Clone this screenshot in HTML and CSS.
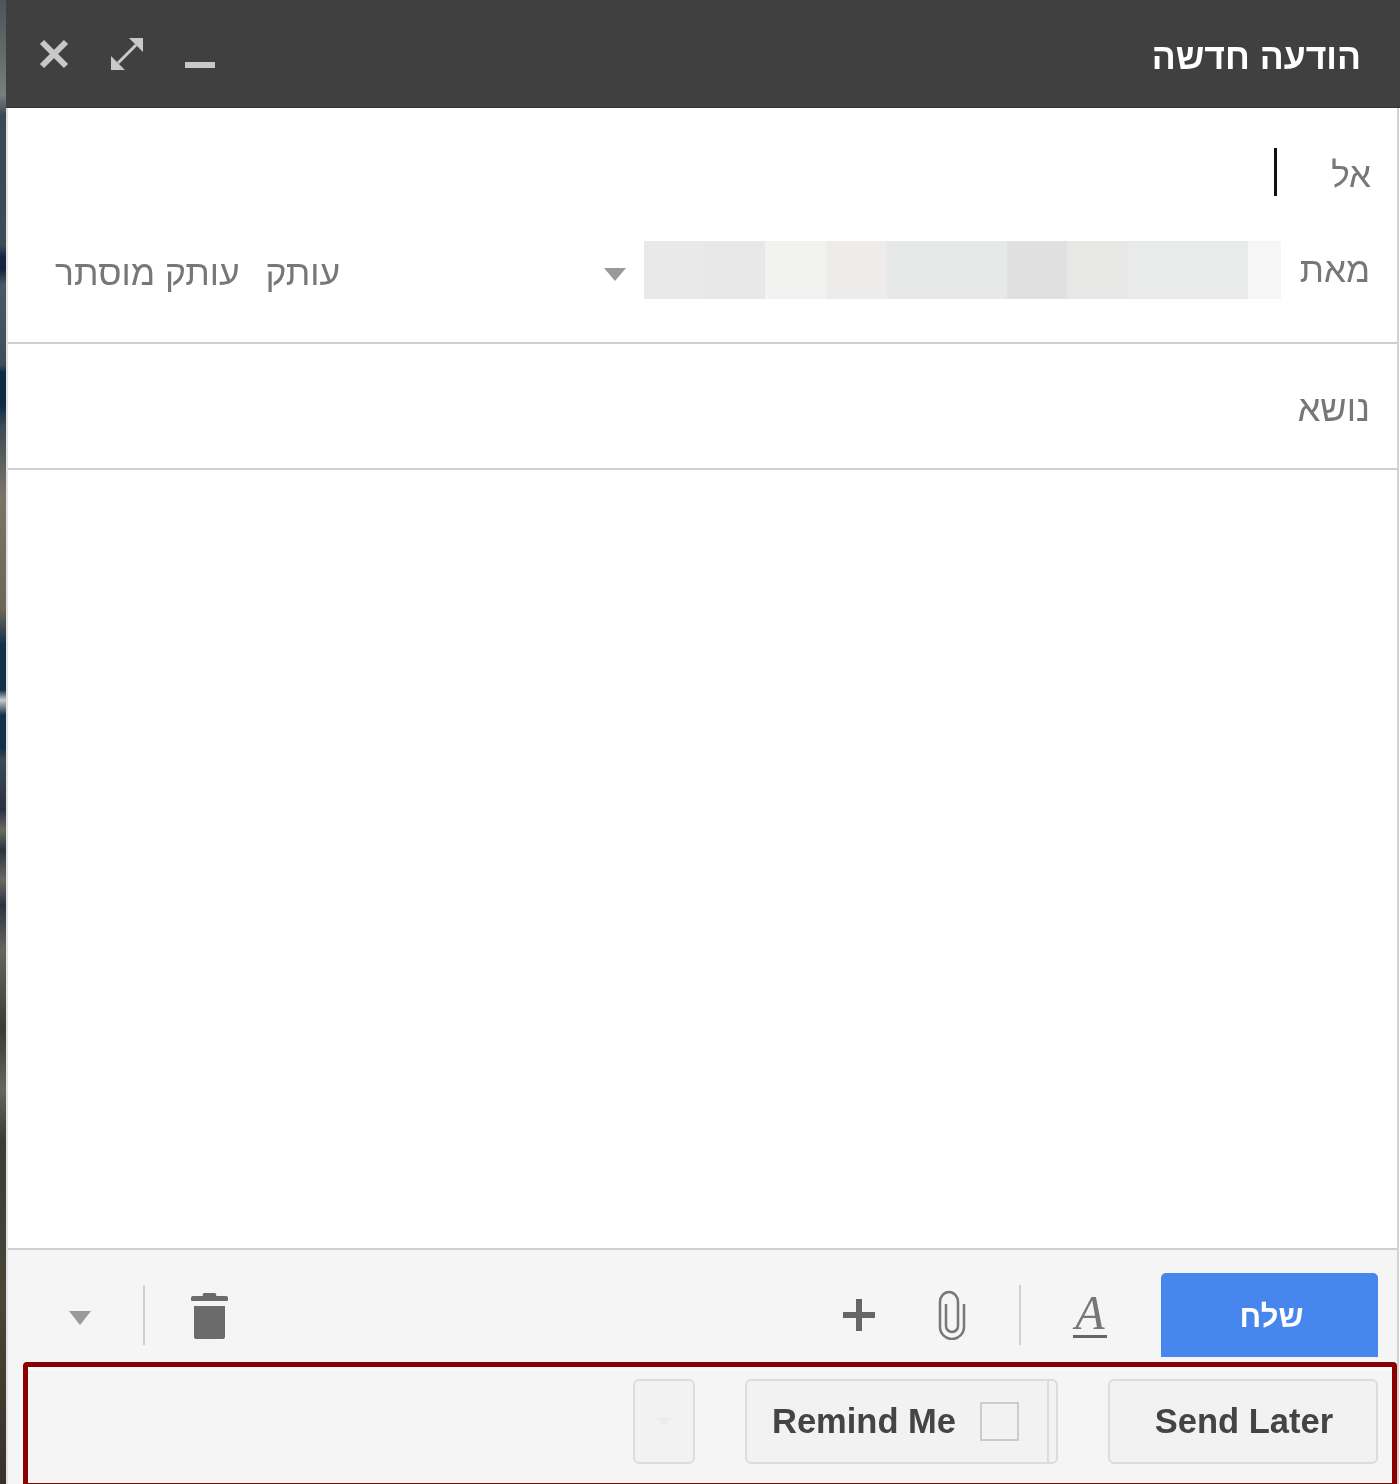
FILE: index.html
```html
<!DOCTYPE html>
<html lang="he" dir="rtl">
<head>
<meta charset="utf-8">
<title>הודעה חדשה</title>
<link rel="stylesheet" href="styles.css">
</head>
<body>
<div class="window">
  <header class="titlebar">
    <span class="title">הודעה חדשה</span>
    <div class="window-icons">
      <svg class="wicon" viewBox="0 0 32 32"><rect x="1" y="24" width="30" height="6" fill="#c8c8c8"/></svg>
      <svg class="wicon" viewBox="0 0 32 32"><path d="M32 0v14L18 0zM0 32V18l14 14z" fill="#c8c8c8"/><path d="M25 7L7 25" stroke="#c8c8c8" stroke-width="3" fill="none"/></svg>
      <svg class="wicon" viewBox="0 0 32 32"><path d="M4 4l24 24M28 4L4 28" stroke="#c8c8c8" stroke-width="6" fill="none"/></svg>
    </div>
  </header>
  <main class="main">
    <div class="recipients">
      <div class="to-row"><span class="label">אל</span><span class="cursor"></span></div>
      <div class="from-row">
        <span class="label">מאת</span>
        <div class="blurred" dir="ltr">
          <i class="s1"></i><i class="s2"></i><i class="s3"></i><i class="s4"></i><i class="s5"></i><i class="s6"></i><i class="s7"></i><i class="s8"></i><i class="s9"></i>
        </div>
        <span class="tri from-tri"></span>
        <div class="cc">
          <span class="label">עותק</span>
          <span class="label">עותק מוסתר</span>
        </div>
      </div>
    </div>
    <div class="subject"><span class="label">נושא</span></div>
    <div class="editor"></div>
    <footer class="footer">
      <div class="toolbar">
        <div class="send">שלח</div>
        <div class="format"><span class="format-a">A</span><span class="format-line"></span></div>
        <span class="vline vline-a"></span>
        <svg class="clip" viewBox="0 0 28 50"><path d="M26 14V37a12 12 0 0 1-24 0V12a9 10 0 0 1 18 0V36a6 6 0 0 1-12 0V14" fill="none" stroke="#777" stroke-width="2.500"/></svg>
        <svg class="plus" viewBox="0 0 32 32"><path d="M13 0h6v13h13v6H19v13h-6V19H0v-6h13z" fill="#666"/></svg>
        <div class="tool-spacer"></div>
        <svg class="trash" viewBox="0 0 37 46"><path d="M14 0h9a2 2 0 0 1 2 3h10a2 2 0 0 1 2 2v2a1 1 0 0 1-1 1H1a1 1 0 0 1-1-1V5a2 2 0 0 1 2-2h10a2 2 0 0 1 2-3zM3 13h31v31a2 2 0 0 1-2 2H5a2 2 0 0 1-2-2z" fill="#6b6b6b"/></svg>
        <span class="vline vline-b"></span>
        <span class="tri more-tri"></span>
      </div>
      <div class="extension">
        <div class="ext-btn send-later" dir="ltr">Send Later</div>
        <div class="ext-btn remind" dir="ltr"><span>Remind Me</span><span class="check"></span><span class="remind-bar"></span></div>
        <div class="ext-btn arrow-box"><span class="faint-tri"></span></div>
      </div>
    </footer>
  </main>
</div>
</body>
</html>
```
FILE: styles.css
```css
* { box-sizing: border-box; }
html, body { margin: 0; height: 1484px; overflow: hidden; }
body {
  background: linear-gradient(180deg,
    #4a5560 0, #5f6a68 50px, #7a8080 95px, #3a4a55 115px, #3d4c57 245px, #14233f 258px, #16253f 270px,
    #4a5a65 285px, #3f4f5a 365px, #0e2a45 372px, #0e2a45 405px, #3a4a55 425px, #7a7468 495px, #6d6558 610px,
    #12304a 645px, #12304a 690px, #c8ccc8 700px, #143248 715px, #143248 748px, #3c4a55 760px, #2a3340 810px,
    #6a6a60 830px, #2a3340 850px, #6a6a60 880px, #2a3340 905px, #66665a 950px, #3a3c36 1030px, #66665a 1090px,
    #3a3c36 1140px, #4a4638 1300px, #3a3028 1484px);
  padding-left: 6px;
  font-family: "Liberation Sans", Arial, sans-serif;
}
.window { height: 1484px; background: #fff; display: flex; flex-direction: column; overflow: hidden; filter: blur(.55px); }
.titlebar {
  height: 108px; flex: none; background: #404040; display: flex;
  justify-content: space-between; align-items: flex-start;
  padding: 0 39px 0 32px; border-bottom: 1px solid #333;
}
.title { color: #fff; font-size: 35.500px; font-weight: 700; line-height: 114px; }
.window-icons { display: flex; gap: 41px; padding-top: 38px; }
.wicon { width: 32px; height: 32px; display: block; }
.main { flex: 1; min-height: 0; display: flex; flex-direction: column; border-left: 2px solid #e2e2e2; border-right: 2px solid #d2d2d2; margin-right: 1px; }
.recipients { height: 236px; flex: none; border-bottom: 2px solid #cfcfcf; padding: 40px 26px 0 0; display: flex; flex-direction: column; }
.label { color: #777; font-size: 35px; line-height: 48px; white-space: nowrap; }
.to-row { display: flex; align-items: center; height: 48px; }
.to-row .label { margin-left: 54px; padding-top: 6px; }
.cursor { width: 3px; height: 48px; background: #111; }
.from-row { display: flex; align-items: center; margin-top: 45px; height: 58px; margin-right: 1px; }
.from-row > .label { margin-left: 19px; }
.blurred { display: grid; grid-template-columns: 60px 61px 61px 61px 120px 60px 61px 120px 33px; width: 637px; height: 58px; }
.s1 { background: #e9e9e9; } .s2 { background: #e8e8e8; } .s3 { background: #f2f2f1; }
.s4 { background: #edecea; } .s5 { background: #e7e8e8; } .s6 { background: #e0e0e0; }
.s7 { background: #e7e7e5; } .s8 { background: #e9ebea; } .s9 { background: #f6f6f6; }
.tri { display: block; width: 0; height: 0; border-style: solid; border-color: #999 transparent transparent; flex: none; }
.from-tri { border-width: 13px 11px 0; margin-right: 18px; margin-top: 8px; }
.cc { margin-right: auto; margin-left: 47px; padding-top: 5px; display: flex; gap: 26px; }
.cc .label { font-size: 35.500px; }
.subject { height: 126px; flex: none; border-bottom: 2px solid #cfcfcf; padding: 41px 27px 0 0; }
.subject .label { font-size: 36px; }
.editor { flex: 1; }
.footer { height: 236px; flex: none; background: #f5f5f5; border-top: 2px solid #cfcfcf; display: flex; flex-direction: column; }
.toolbar { height: 112px; flex: none; display: flex; align-items: flex-start; padding: 23px 19px 0 0; }
.send { width: 217px; height: 84px; background: #4787ed; color: #fff; font-weight: 700; font-size: 31px; line-height: 88px; padding-left: 4px; text-align: center; border-radius: 5px 5px 0 0; }
.format { width: 34px; margin-right: 54px; margin-top: 21px; display: flex; flex-direction: column; align-items: center; }
.format-a { font-family: "Liberation Serif", serif; font-style: italic; font-size: 48px; line-height: 38px; height: 38px; color: #777; }
.format-line { width: 34px; height: 3px; background: #666; margin-top: 3px; }
.vline { display: block; width: 2px; height: 60px; background: #cfcfcf; margin-top: 12px; flex: none; }
.vline-a { margin-right: 52px; }
.clip { width: 28px; height: 50px; margin-right: 53px; margin-top: 17px; flex: none; }
.plus { width: 32px; height: 32px; margin-right: 63px; margin-top: 26px; flex: none; }
.tool-spacer { flex: 1; }
.trash { width: 37px; height: 46px; margin-left: 46px; margin-top: 20px; flex: none; }
.vline-b { margin-left: 52px; }
.more-tri { border-width: 14px 11px 0; margin-left: 61px; margin-top: 38px; }
.extension {
  margin: 0 0 0 15px; height: 126px; flex: none; border: 5px solid #8b0000; border-radius: 4px;
  display: flex; align-items: flex-start; gap: 50px; padding: 12px 14px 0 0;
  box-shadow: inset 0 3px 0 #fbfbfb;
}
.ext-btn { height: 85px; border: 2px solid #dcdcdc; border-radius: 6px; background: #f2f2f2; color: #444; font-weight: 700; font-size: 34.500px; line-height: 81px; flex: none; }
.send-later { width: 270px; text-align: center; padding-left: 2px; }
.remind { width: 313px; display: flex; align-items: center; padding-left: 25px; position: relative; }
.check { width: 39px; height: 39px; border: 2px solid #ccc; margin-left: 24px; }
.remind-bar { position: absolute; right: 7px; top: 0; bottom: 0; width: 2px; background: #dcdcdc; }
.arrow-box { width: 62px; display: flex; align-items: center; justify-content: center; }
.faint-tri { width: 0; height: 0; border-style: solid; border-width: 9px 8px 0; border-color: #ececec transparent transparent; }
```
